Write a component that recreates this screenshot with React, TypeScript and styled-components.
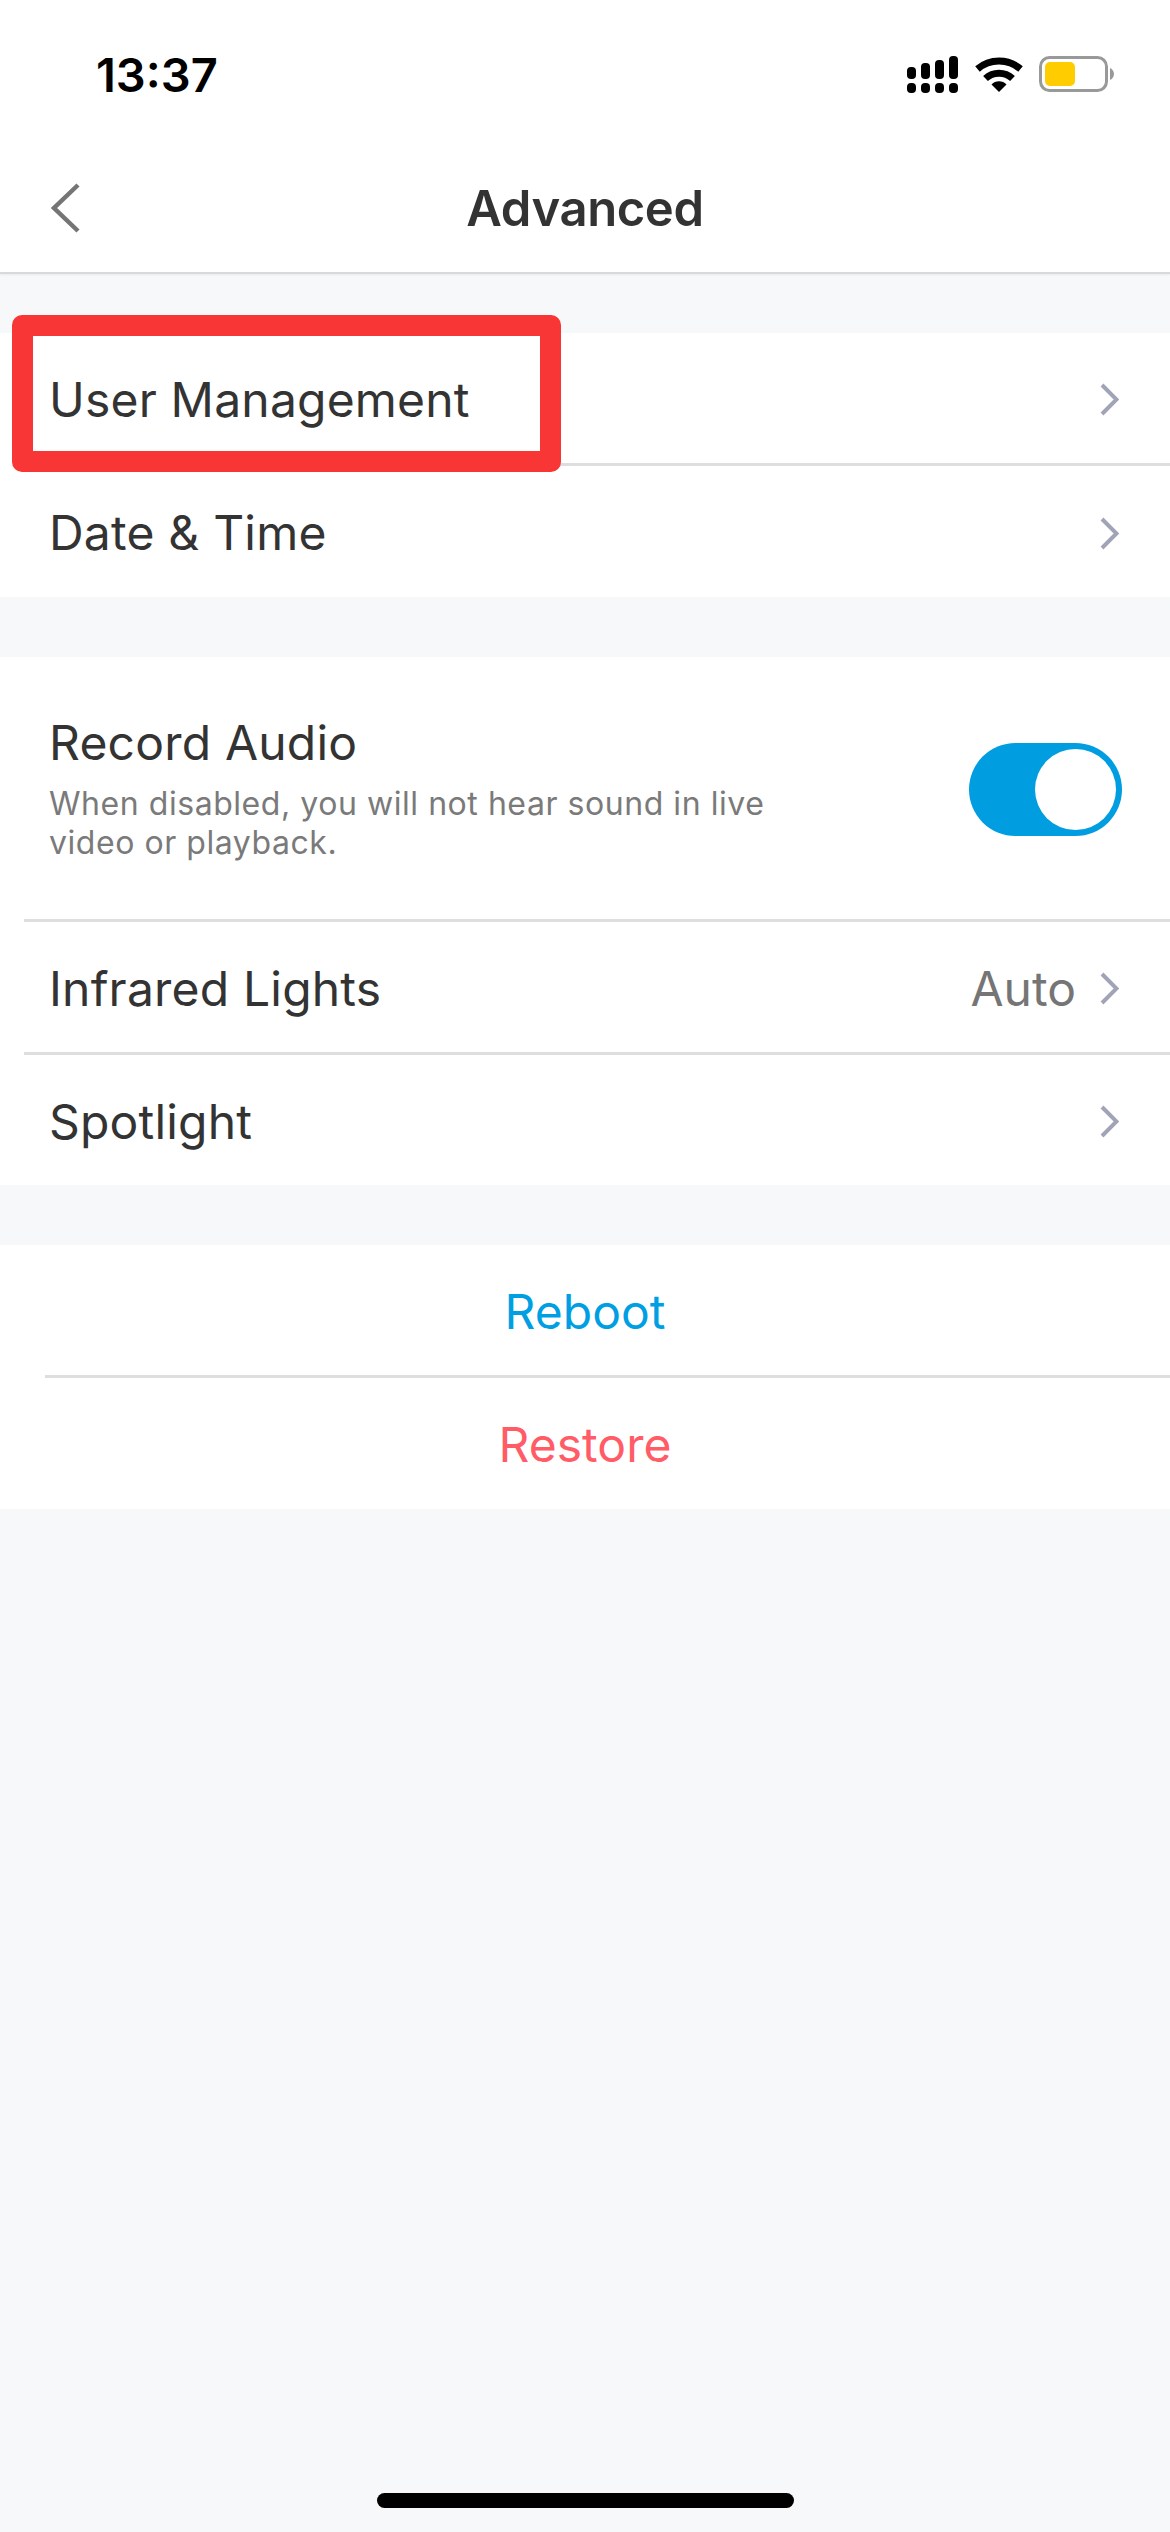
import React from 'react';
import styled, { createGlobalStyle } from 'styled-components';

const GlobalStyle = createGlobalStyle`
  html, body {
    margin: 0;
    padding: 0;
    background: #f7f8fa;
  }
  * {
    box-sizing: border-box;
  }
`;

const Chevron = () => (
  <ChevronIcon viewBox="0 0 19 33" fill="none">
    <path d="M2 2L16.5 16.5L2 31" stroke="#a1a3b6" strokeWidth="4" />
  </ChevronIcon>
);

const SignalIcon = () => (
  <svg width="52" height="37" viewBox="0 0 52 37" fill="#000">
    <rect x="0" y="11" width="9" height="12" rx="4" />
    <rect x="14" y="7" width="9" height="16" rx="4" />
    <rect x="28" y="4" width="9" height="19" rx="4" />
    <rect x="42" y="0" width="9" height="23" rx="4" />
    <rect x="0" y="27" width="9" height="10" rx="4" />
    <rect x="14" y="27" width="9" height="10" rx="4" />
    <rect x="28" y="27" width="9" height="10" rx="4" />
    <rect x="42" y="27" width="9" height="10" rx="4" />
  </svg>
);

const WifiIcon = () => (
  <svg width="48" height="37" viewBox="0 0 48 37" fill="none">
    <path d="M2.5 13A33 33 0 0 1 45.5 13" stroke="#000" strokeWidth="7" />
    <path d="M10.5 22.5A20 20 0 0 1 37.5 22.5" stroke="#000" strokeWidth="7" />
    <path d="M24 36L16.5 28.5A10.5 10.5 0 0 1 31.5 28.5Z" fill="#000" />
  </svg>
);

const BatteryIcon = () => (
  <svg width="76" height="37" viewBox="0 0 76 37" fill="none">
    <rect x="1.5" y="1.5" width="66" height="33" rx="9" stroke="#999" strokeWidth="3" />
    <rect x="6" y="6" width="30" height="24" rx="5" fill="#ffcc00" />
    <path d="M71 12C73.5 13 75 15.5 75 18C75 20.5 73.5 23 71 24Z" fill="#999" />
  </svg>
);

const App = () => {
  return (
    <Page>
      <GlobalStyle />
      <Header>
        <StatusBar>
          <Time>13:37</Time>
          <StatusIcons>
            <SignalIcon />
            <WifiIcon />
            <BatteryIcon />
          </StatusIcons>
        </StatusBar>
        <NavBar>
          <BackIcon viewBox="0 0 29 50" fill="none">
            <path d="M27 2L3 25L27 48" stroke="#757575" strokeWidth="4.5" />
          </BackIcon>
          <Title>Advanced</Title>
        </NavBar>
      </Header>

      <Group>
        <Row>
          <RowLabel>User Management</RowLabel>
          <Chevron />
        </Row>
        <Divider $inset={24} />
        <Row $height={131}>
          <RowLabel>Date &amp; Time</RowLabel>
          <Chevron />
        </Row>
        <Highlight />
      </Group>

      <Group>
        <ToggleRow>
          <ToggleText>
            <RowLabel>Record Audio</RowLabel>
            <RowHint>When disabled, you will not hear sound in live video or playback.</RowHint>
          </ToggleText>
          <Toggle>
            <Knob />
          </Toggle>
        </ToggleRow>
        <Divider $inset={24} />
        <Row>
          <RowLabel>Infrared Lights</RowLabel>
          <RowValue>Auto</RowValue>
          <Chevron />
        </Row>
        <Divider $inset={24} />
        <Row>
          <RowLabel>Spotlight</RowLabel>
          <Chevron />
        </Row>
      </Group>

      <Group>
        <ActionRow $color="#009fe3">Reboot</ActionRow>
        <Divider $inset={45} />
        <ActionRow $color="#ff5c67" $height={131}>Restore</ActionRow>
      </Group>

      <HomeIndicator />
    </Page>
  );
};

const Page = styled.div`
  display: flex;
  flex-direction: column;
  gap: 60px;
  height: 2532px;
  width: 1170px;
  position: relative;
  overflow: hidden;
  background: #f7f8fa;
  color: #333;
  font-family: Inter, "Liberation Sans", sans-serif;
`;

const Header = styled.header`
  background: #fff;
  border-bottom: 2px solid #d9d9d9;
  box-shadow: 0 1px 2px rgba(0, 0, 0, 0.06);
  margin-bottom: -1px;
`;

const StatusBar = styled.div`
  align-items: center;
  display: flex;
  height: 148px;
  justify-content: space-between;
  padding: 0 55px 0 96px;
`;

const Time = styled.span`
  color: #000;
  font-size: 47px;
  font-weight: 600;
`;

const StatusIcons = styled.div`
  align-items: center;
  display: flex;
  gap: 16px;
`;

const NavBar = styled.div`
  align-items: center;
  display: flex;
  height: 124px;
  justify-content: center;
  padding-bottom: 4px;
  position: relative;
`;

const BackIcon = styled.svg`
  height: 50px;
  left: 51px;
  position: absolute;
  top: 35px;
  width: 29px;
`;

const Title = styled.h1`
  font-size: 49px;
  font-weight: 600;
  letter-spacing: -0.4px;
  margin: 0;
`;

const Group = styled.section`
  background: #fff;
  position: relative;
`;

const Row = styled.div<{ $height?: number }>`
  align-items: center;
  display: flex;
  height: ${(p) => p.$height ?? 130}px;
  padding: 3px 51px 0 49px;
`;

const ToggleRow = styled.div`
  align-items: center;
  display: flex;
  height: 262px;
  justify-content: space-between;
  padding: 3px 48px 0 49px;
`;

const ToggleText = styled.div`
  display: flex;
  flex-direction: column;
  gap: 10px;
  margin-top: -6px;
  width: 760px;
`;

const RowLabel = styled.span`
  flex: 1;
  font-size: 48px;
  letter-spacing: 0.2px;
  line-height: 62px;
`;

const RowHint = styled.p`
  color: #7a7a7a;
  font-size: 32px;
  letter-spacing: 0.55px;
  line-height: 39px;
  margin: 0;
`;

const RowValue = styled.span`
  color: #757575;
  font-size: 48px;
  margin-right: 24px;
`;

const ChevronIcon = styled.svg`
  flex: none;
  height: 33px;
  width: 19px;
`;

const Divider = styled.div<{ $inset: number }>`
  background: #dedede;
  height: 3px;
  margin-left: ${(p) => p.$inset}px;
`;

const Toggle = styled.div`
  align-items: center;
  background: #009ee0;
  border-radius: 47px;
  display: flex;
  height: 93px;
  justify-content: flex-end;
  padding-right: 6px;
  width: 153px;
`;

const Knob = styled.div`
  background: #fff;
  border-radius: 50%;
  height: 81px;
  width: 81px;
`;

const ActionRow = styled.div<{ $color: string; $height?: number }>`
  align-items: center;
  color: ${(p) => p.$color};
  display: flex;
  font-size: 48px;
  height: ${(p) => p.$height ?? 130}px;
  justify-content: center;
  padding-top: 2px;
`;

const Highlight = styled.div`
  border: 21px solid #f93636;
  border-radius: 10px;
  height: 157px;
  left: 12px;
  position: absolute;
  top: -18px;
  width: 549px;
`;

const HomeIndicator = styled.div`
  background: #000;
  border-radius: 8px;
  bottom: 24px;
  height: 15px;
  left: 377px;
  position: absolute;
  width: 417px;
`;

export default App;
